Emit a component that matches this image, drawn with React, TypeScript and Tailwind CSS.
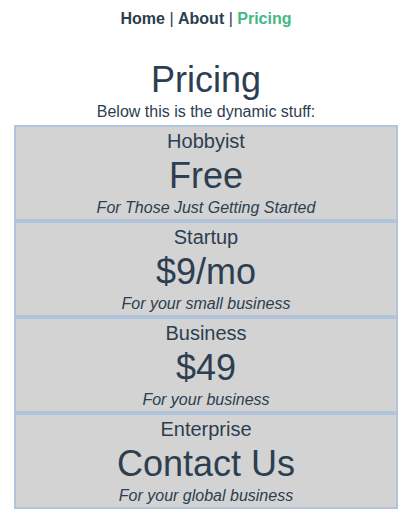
const plans = [
  { name: "Hobbyist", price: "Free", blurb: "For Those Just Getting Started" },
  { name: "Startup", price: "$9/mo", blurb: "For your small business" },
  { name: "Business", price: "$49", blurb: "For your business" },
  { name: "Enterprise", price: "Contact Us", blurb: "For your global business" },
];

export default function App() {
  return (
    <div className="w-[412px] text-center text-[#2c3e50] font-['Liberation_Sans',Arial,sans-serif]">
      <nav className="pt-[10px] text-[16px] leading-[18px]">
        <a className="font-bold">Home</a> | <a className="font-bold">About</a> |{" "}
        <a className="font-bold text-[#42b983]">Pricing</a>
      </nav>

      <h1 className="mt-[32px] text-[36px] leading-[40px]">Pricing</h1>
      <p className="mt-[3px] text-[16px] leading-[18px]">Below this is the dynamic stuff:</p>

      <div className="mx-[14px] mt-[4px]">
        {plans.map((p) => (
          <div key={p.name} className="h-[96px] border-2 border-[#b0c4de] bg-[#d3d3d3]">
            <div className="pt-[1px] text-[20px] leading-[26px]">{p.name}</div>
            <div className="text-[36px] leading-[42px] pt-[1px]">{p.price}</div>
            <div className="text-[16px] leading-[22px] italic">{p.blurb}</div>
          </div>
        ))}
      </div>
    </div>
  );
}
